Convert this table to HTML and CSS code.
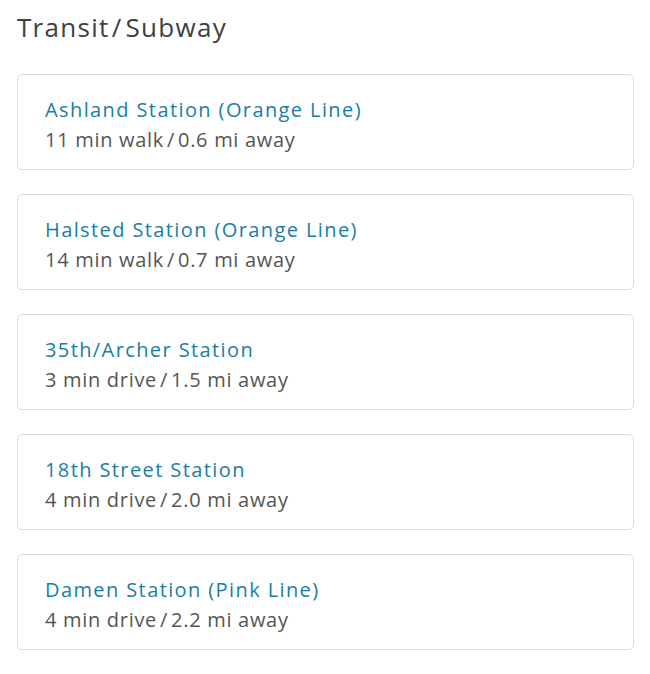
FILE: index.html
```html
<!DOCTYPE html>
<html lang="en">
<head>
<meta charset="utf-8">
<title>Transit / Subway</title>
<link rel="stylesheet" href="styles.css">
</head>
<body>
<section class="transit">
  <h2 class="transit-title">Transit<span class="sep">/</span>Subway</h2>
  <ul class="station-list">
    <li class="station-card">
      <div class="station-name">Ashland Station (Orange Line)</div>
      <div class="station-dist">11 min walk<span class="sep">/</span>0.6 mi away</div>
    </li>
    <li class="station-card">
      <div class="station-name">Halsted Station (Orange Line)</div>
      <div class="station-dist">14 min walk<span class="sep">/</span>0.7 mi away</div>
    </li>
    <li class="station-card">
      <div class="station-name">35th/Archer Station</div>
      <div class="station-dist">3 min drive<span class="sep">/</span>1.5 mi away</div>
    </li>
    <li class="station-card">
      <div class="station-name">18th Street Station</div>
      <div class="station-dist">4 min drive<span class="sep">/</span>2.0 mi away</div>
    </li>
    <li class="station-card">
      <div class="station-name">Damen Station (Pink Line)</div>
      <div class="station-dist">4 min drive<span class="sep">/</span>2.2 mi away</div>
    </li>
  </ul>
</section>
</body>
</html>
```
FILE: styles.css
```css
* { box-sizing: border-box; }
html, body { margin: 0; padding: 0; background: #fff; }
body {
  font-family: "Open Sans", Lato, sans-serif;
  color: #333;
}
.transit {
  padding: 8px 16px 0 17px;
}
.transit-title {
  margin: 0;
  font-size: 26px;
  font-weight: 400;
  line-height: 38px;
  color: #404040;
  letter-spacing: 1.3px;
}
.sep {
  margin: 0 3px;
}
.transit-title .sep {
  margin: 0 3px 0 2px;
}
.station-list {
  list-style: none;
  margin: 28px 0 0;
  padding: 0;
  display: flex;
  flex-direction: column;
  gap: 24px;
}
.station-card {
  height: 96px;
  border: 1px solid #dcdcdc;
  border-radius: 5px;
  padding: 20px 27px 0;
}
.station-name {
  font-size: 20px;
  font-weight: 500;
  line-height: 30px;
  color: #197ea6;
  letter-spacing: 1.4px;
}
.station-dist {
  font-size: 20px;
  line-height: 30px;
  color: #555;
  letter-spacing: 0.7px;
}
```
